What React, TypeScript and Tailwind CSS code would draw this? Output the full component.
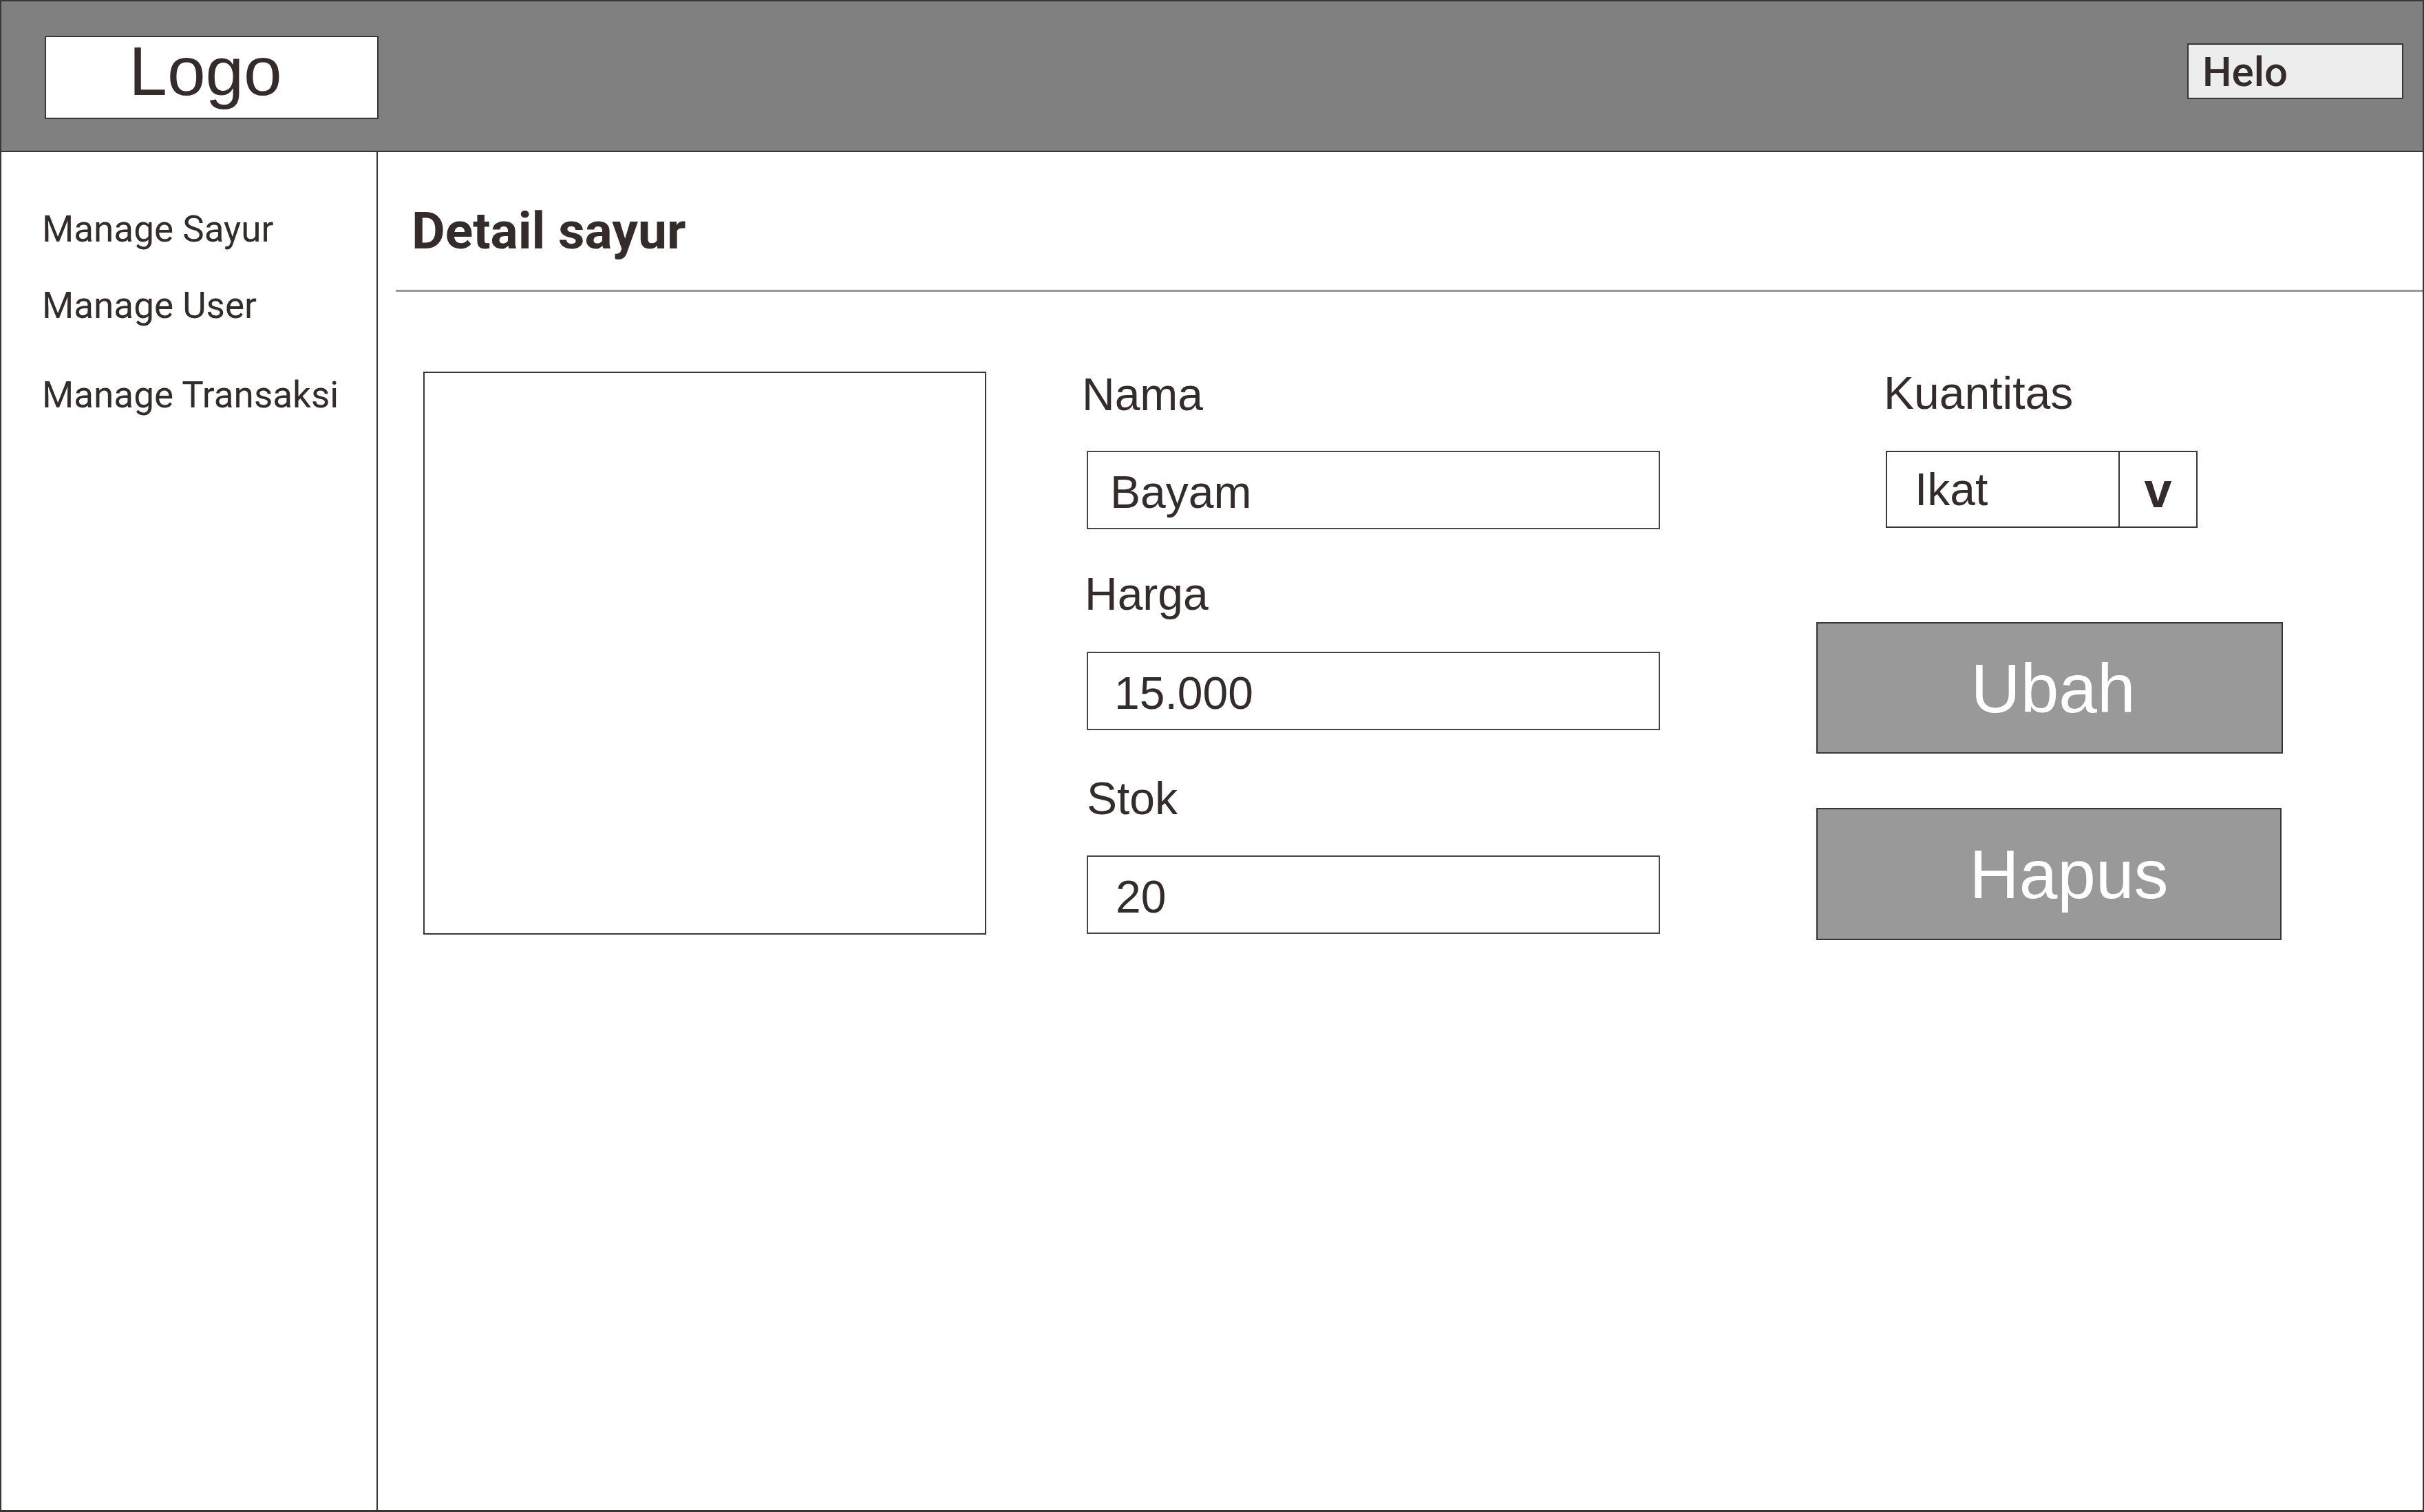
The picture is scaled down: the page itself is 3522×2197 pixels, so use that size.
export default function App() {
  const sans = { fontFamily: '"Liberation Sans", Arial, sans-serif' };
  const roboto = { fontFamily: 'Roboto, "Noto Sans", sans-serif' };

  return (
    <div className="flex h-[2197px] w-[3522px] flex-col border-2 border-b-[3px] border-[#3b3535] bg-white text-[#332c2a]">
      <header className="flex h-[219px] shrink-0 items-start justify-between border-b-2 border-[#3b3535] bg-[#808080] pl-[63px] pr-[28px]">
        <div
          className="mt-[50px] flex h-[121px] w-[485px] items-center justify-center border-2 border-[#3b3535] bg-white pb-[19px] pr-[18px]"
          style={sans}
        >
          <span className="text-[100px] leading-none">Logo</span>
        </div>
        <div
          className="mt-[61px] flex h-[81px] w-[314px] items-center border-2 border-[#3b3535] bg-[#ededed] pl-[20px] pt-[3px]"
          style={roboto}
        >
          <span className="text-[60px] font-medium leading-none">Helo</span>
        </div>
      </header>

      <div className="flex min-h-0 flex-1">
        <aside className="w-[547px] shrink-0 border-r-2 border-[#3b3535] pl-[59px] pt-[86px]" style={roboto}>
          <p className="text-[53px] leading-none">Manage Sayur</p>
          <p className="mt-[58px] text-[53px] leading-none">Manage User</p>
          <p className="mt-[77px] text-[53px] leading-none">Manage Transaksi</p>
        </aside>

        <main className="min-w-0 flex-1">
          <h1 className="pl-[49px] pt-[77px] text-[75px] font-bold leading-none" style={roboto}>
            Detail sayur
          </h1>
          <div className="ml-[26px] mt-[48px] h-[3px] bg-[#999999]" />

          <div className="mt-[114px] flex items-start" style={sans}>
            <div className="ml-[66px] mt-[2px] h-[818px] w-[818px] shrink-0 border-2 border-[#3b3535]" />

            <div className="ml-[146px] w-[833px] shrink-0">
              <p className="-ml-[7px] mt-[2px] text-[66px] leading-none">Nama</p>
              <div className="mt-[49px] flex h-[114px] items-center border-2 border-[#4a4444] pl-[32px] pt-[6px]">
                <span className="text-[66px] leading-none">Bayam</span>
              </div>
              <p className="-ml-[3px] mt-[61px] text-[66px] leading-none">Harga</p>
              <div className="mt-[51px] flex h-[114px] items-center border-2 border-[#4a4444] pl-[38px] pt-[6px]">
                <span className="text-[66px] leading-none">15.000</span>
              </div>
              <p className="mt-[66px] text-[66px] leading-none">Stok</p>
              <div className="mt-[50px] flex h-[114px] items-center border-2 border-[#4a4444] pl-[40px] pt-[6px]">
                <span className="text-[66px] leading-none">20</span>
              </div>
            </div>

            <div className="ml-[227px] w-[678px] shrink-0">
              <p className="ml-[98px] text-[66px] leading-none">Kuantitas</p>
              <div className="ml-[101px] mt-[51px] flex h-[112px] w-[453px] border-2 border-[#3b3535]">
                <div className="flex flex-1 items-center pl-[40px]">
                  <span className="text-[66px] leading-none">Ikat</span>
                </div>
                <div className="flex w-[113px] items-center justify-center border-l-2 border-[#3b3535] pt-[2px]">
                  <span className="text-[72px] font-bold leading-none">v</span>
                </div>
              </div>
              <button className="mt-[137px] flex h-[191px] w-[678px] items-center justify-center border-2 border-[#3b3535] bg-[#999999] pl-[10px] text-[100px] leading-none text-white">
                Ubah
              </button>
              <button className="mt-[79px] flex h-[192px] w-[676px] items-center justify-center border-2 border-[#3b3535] bg-[#999999] pl-[58px] text-[100px] leading-none text-white">
                Hapus
              </button>
            </div>
          </div>
        </main>
      </div>
    </div>
  );
}
